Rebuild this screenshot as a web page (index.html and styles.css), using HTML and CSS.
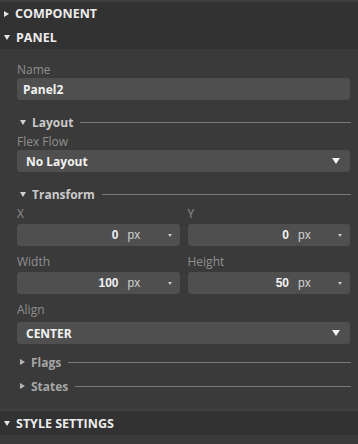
FILE: index.html
```html
<!DOCTYPE html>
<html lang="en">
<head>
  <meta charset="UTF-8">
  <meta name="viewport" content="width=device-width, initial-scale=1.0">
  <title>Inspector</title>
  <link rel="stylesheet" href="styles.css">
</head>
<body>
<div class="inspector">
  <div class="group-head top">
    <span class="caret right"></span>COMPONENT
  </div>
  <div class="group-head">
    <span class="caret down"></span>PANEL
  </div>

  <div class="group-body">
    <div class="field">
      <div class="label">Name</div>
      <div class="box">Panel2</div>
    </div>

    <div class="sub-head">
      <span class="caret down small"></span>Layout<span class="rule"></span>
    </div>
    <div class="field tight">
      <div class="label">Flex Flow</div>
      <div class="box select">No Layout<span class="caret down big"></span></div>
    </div>

    <div class="sub-head">
      <span class="caret down small"></span>Transform<span class="rule"></span>
    </div>
    <div class="pair">
      <div class="field">
        <div class="label">X</div>
        <div class="box number"><span class="value">0</span><span class="unit">px</span><span class="caret down tiny"></span></div>
      </div>
      <div class="field">
        <div class="label">Y</div>
        <div class="box number"><span class="value">0</span><span class="unit">px</span><span class="caret down tiny"></span></div>
      </div>
      <div class="field">
        <div class="label">Width</div>
        <div class="box number"><span class="value">100</span><span class="unit">px</span><span class="caret down tiny"></span></div>
      </div>
      <div class="field">
        <div class="label">Height</div>
        <div class="box number"><span class="value">50</span><span class="unit">px</span><span class="caret down tiny"></span></div>
      </div>
    </div>
    <div class="field align">
      <div class="label">Align</div>
      <div class="box select">CENTER<span class="caret down big"></span></div>
    </div>

    <div class="sub-head dim first">
      <span class="caret right small"></span>Flags<span class="rule"></span>
    </div>
    <div class="sub-head dim">
      <span class="caret right small"></span>States<span class="rule"></span>
    </div>
  </div>

  <div class="group-head strip">
    <span class="caret down"></span>STYLE SETTINGS
  </div>
</div>
</body>
</html>
```

FILE: styles.css
```css
body {
  margin: 0;
  background: #3a3a3a;
  font-family: "Open Sans", "Noto Sans", sans-serif;
  font-size: 12px;
  color: #e6e6e6;
}
.inspector {
  width: 358px;
}
.group-head {
  height: 24px;
  display: flex;
  align-items: center;
  gap: 6px;
  padding-left: 4px;
  background: #323232;
  font-weight: 700;
  font-size: 12.5px;
  color: #ececec;
}
.group-head.top {
  border-top: 2px solid #3d3d3d;
  height: 23px;
}
.group-head.strip {
  border-top: 2px solid #404040;
}
.group-body {
  padding: 14px 8px 13px 17px;
}
.caret {
  display: inline-block;
  flex: none;
  width: 0;
  height: 0;
}
.caret.right {
  border-top: 3px solid transparent;
  border-bottom: 3px solid transparent;
  border-left: 5px solid #e6e6e6;
}
.caret.down {
  border-left: 3px solid transparent;
  border-right: 3px solid transparent;
  border-top: 5px solid #e6e6e6;
}
.caret.small.down {
  border-top-color: #cfcfcf;
}
.caret.small.right {
  border-left-color: #b4b4b4;
}
.caret.big {
  border-left-width: 4px;
  border-right-width: 4px;
  border-top: 6px solid #f2f2f2;
  margin-left: auto;
}
.caret.tiny {
  border-left-width: 2px;
  border-right-width: 2px;
  border-top: 3px solid #c8c8c8;
}
.field {
  display: flex;
  flex-direction: column;
}
.label {
  height: 14px;
  line-height: 14px;
  color: #8f8f8f;
  margin-bottom: 1px;
}
.field.tight {
  margin-top: 3px;
}
.pair .label {
  margin-bottom: 3px;
}
.field.align {
  margin-top: 9px;
}
.field.align .label {
  margin-bottom: 5px;
}
.box {
  height: 22px;
  display: flex;
  align-items: center;
  padding: 0 10px 0 6px;
  background: #4f4f4f;
  border-radius: 3px;
  font-weight: 700;
  color: #f2f2f2;
}
.box.select {
  padding-left: 9px;
}
.box.number {
  padding: 0 8px 0 6px;
  font-family: "Liberation Sans", Arial, sans-serif;
}
.value {
  flex: 1;
  text-align: right;
}
.unit {
  box-sizing: border-box;
  width: 49px;
  padding-left: 9px;
  font-weight: 400;
  color: #cfcfcf;
}
.sub-head {
  height: 20px;
  display: flex;
  align-items: center;
  gap: 6px;
  padding-left: 3px;
  margin-top: 12px;
  font-weight: 700;
  color: #cacaca;
}
.sub-head.dim {
  color: #a6a6a6;
  margin-top: 4px;
}
.sub-head.dim.first {
  margin-top: 8px;
}
.rule {
  flex: 1;
  height: 1px;
  margin-left: 1px;
  margin-right: -1px;
  background: #7a7a7a;
}
.pair {
  display: grid;
  grid-template-columns: 1fr 1fr;
  column-gap: 8px;
  row-gap: 9px;
  margin-top: 3px;
}
```
